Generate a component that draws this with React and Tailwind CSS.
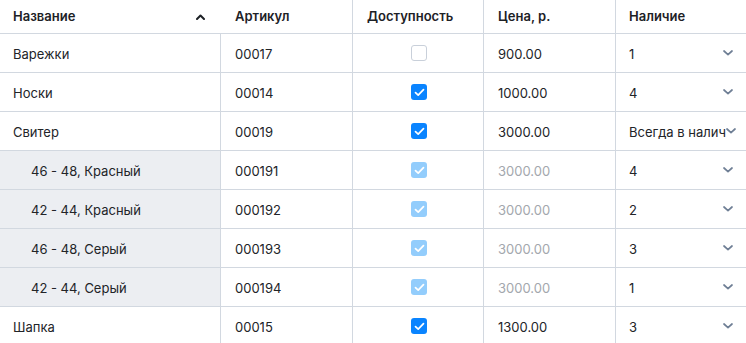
import React from "react";

const rows = [
  { name: "Варежки", sku: "00017", avail: "off", price: "900.00", stock: "1" },
  { name: "Носки", sku: "00014", avail: "on", price: "1000.00", stock: "4" },
  { name: "Свитер", sku: "00019", avail: "on", price: "3000.00", stock: "Всегда в наличии", long: true },
  { name: "46 - 48, Красный", sku: "000191", avail: "dis", price: "3000.00", stock: "4", sub: true },
  { name: "42 - 44, Красный", sku: "000192", avail: "dis", price: "3000.00", stock: "2", sub: true },
  { name: "46 - 48, Серый", sku: "000193", avail: "dis", price: "3000.00", stock: "3", sub: true },
  { name: "42 - 44, Серый", sku: "000194", avail: "dis", price: "3000.00", stock: "1", sub: true },
  { name: "Шапка", sku: "00015", avail: "on", price: "1300.00", stock: "3" },
];

function Check({ state }) {
  if (state === "off") {
    return <div className="w-4 h-4 rounded-[3px] border border-[#c9d0da] bg-white" />;
  }
  const bg = state === "on" ? "bg-[#0a84ff]" : "bg-[#93cdfc]";
  return (
    <div className={`w-4 h-4 rounded-[3px] ${bg} flex items-center justify-center`}>
      <svg width="11" height="9" viewBox="0 0 11 9" fill="none">
        <path d="M1.5 4.6L4.2 7.2L9.5 1.6" stroke="white" strokeWidth="1.7" strokeLinecap="round" strokeLinejoin="round" />
      </svg>
    </div>
  );
}

function Chevron() {
  return (
    <svg width="10" height="6" viewBox="0 0 10 6" fill="none" className="shrink-0">
      <path d="M1 1L5 4.6L9 1" stroke="#6f7f95" strokeWidth="1.7" strokeLinecap="round" strokeLinejoin="round" />
    </svg>
  );
}

export default function App() {
  return (
    <div className="w-[746px] h-[343px] overflow-hidden bg-white text-[13px] text-[#222428]" style={{ fontFamily: "Inter, 'Noto Sans', sans-serif" }}>
      <div className="flex h-[34px] border-b border-[#d2d8e0] font-semibold text-[#1d2126]">
        <div className="w-[221px] flex items-center justify-between pl-[13px] pr-[16px]">
          <span>Название</span>
          <svg width="9" height="6" viewBox="0 0 9 6" fill="none">
            <path d="M1 5L4.5 1.5L8 5" stroke="#1d2126" strokeWidth="2" strokeLinecap="round" strokeLinejoin="round" />
          </svg>
        </div>
        <div className="w-[132px] border-r border-[#d2d8e0] flex items-center pl-[14px]">Артикул</div>
        <div className="w-[131px] border-r border-[#d2d8e0] flex items-center pl-[14px]">Доступность</div>
        <div className="w-[132px] border-r border-[#d2d8e0] flex items-center pl-[14px]">Цена, р.</div>
        <div className="flex-1 flex items-center pl-[13px]">Наличие</div>
      </div>
      {rows.map((r, i) => (
        <div key={i} className="flex h-[39px] border-b border-[#d2d8e0]">
          <div className={`w-[221px] border-r border-[#d2d8e0] flex items-center pt-[3px] ${r.sub ? "bg-[#eceef2] pl-[31px]" : "pl-[13px]"}`}>
            {r.name}
          </div>
          <div className="w-[132px] border-r border-[#d2d8e0] flex items-center pt-[3px] pl-[14px]">{r.sku}</div>
          <div className="w-[131px] border-r border-[#d2d8e0] flex items-center justify-center pl-[2px]">
            <Check state={r.avail} />
          </div>
          <div className={`w-[132px] border-r border-[#d2d8e0] flex items-center pt-[3px] pl-[14px] ${r.sub ? "text-[#a3a7ad]" : ""}`}>
            {r.price}
          </div>
          <div className={`flex-1 min-w-0 flex items-center pl-[13px] ${r.long ? "pr-[10px]" : "pr-[13px]"}`}>
            <span className="flex-1 min-w-0 overflow-hidden whitespace-nowrap pt-[3px]">{r.stock}</span>
            <Chevron />
          </div>
        </div>
      ))}
    </div>
  );
}
